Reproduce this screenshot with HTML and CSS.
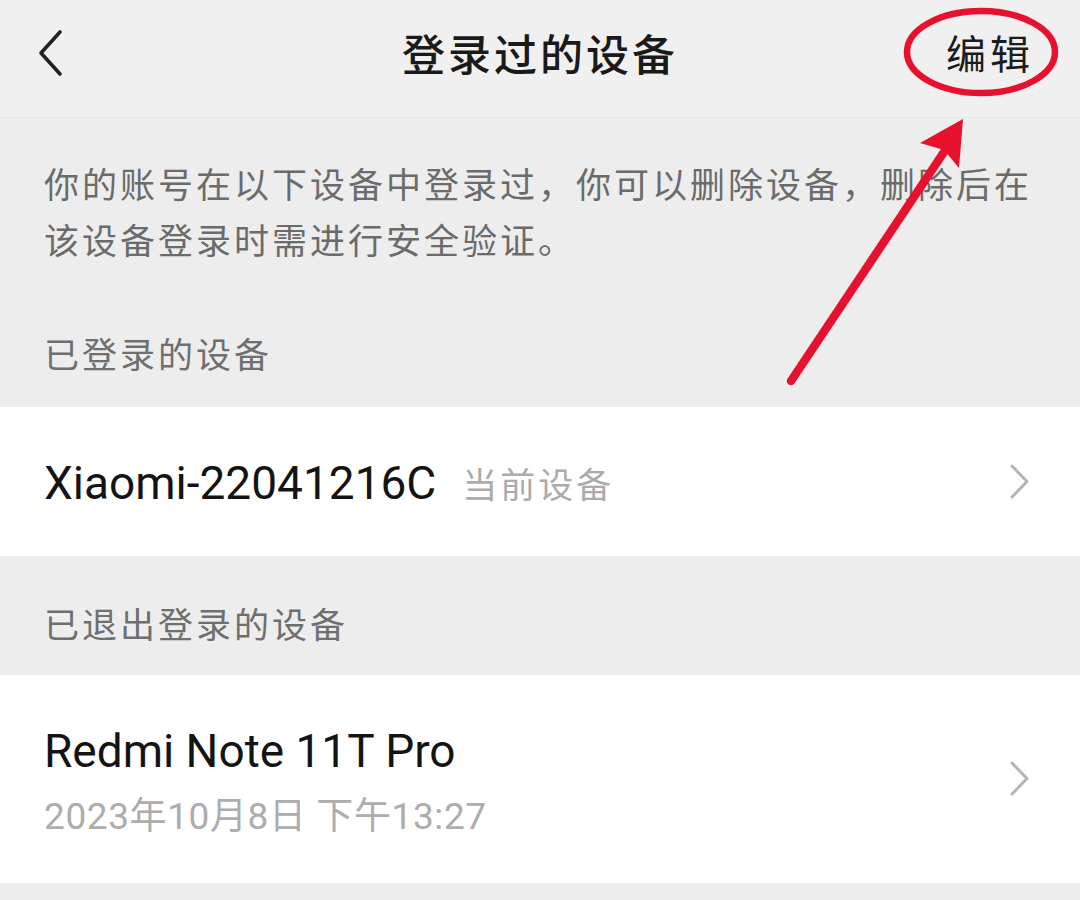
FILE: index.html
```html
<!DOCTYPE html>
<html lang="zh-CN">
<head>
    <meta charset="UTF-8">
    <meta name="viewport" content="width=device-width, initial-scale=1.0">
    <title>登录过的设备</title>
    <link rel="stylesheet" href="styles.css">
</head>
<body>
    <div class="page">
        <div class="top-bar">
            <button class="back-btn" aria-label="返回">
                <svg width="30" height="50" viewBox="0 0 30 50">
                    <path d="M24 3 L5 24 L24 45" fill="none" stroke="#222" stroke-width="3.6" stroke-linecap="round" stroke-linejoin="round"/>
                </svg>
            </button>
            <h1 class="title">登录过的设备</h1>
            <button class="edit-btn">编辑</button>
        </div>

        <p class="intro">你的账号在以下设备中登录过，你可以删除设备，删除后在该设备登录时需进行安全验证。</p>

        <div class="section-label first">已登录的设备</div>
        <div class="device-row single">
            <div class="device-main">
                <span class="device-name">Xiaomi-22041216C</span>
                <span class="device-tag">当前设备</span>
            </div>
            <svg class="chevron" width="24" height="38" viewBox="0 0 24 38">
                <path d="M4 3 L19 18.5 L4 34" fill="none" stroke="#b4b4b4" stroke-width="3" stroke-linecap="round" stroke-linejoin="round"/>
            </svg>
        </div>

        <div class="section-label">已退出登录的设备</div>
        <div class="device-row double">
            <div class="device-info">
                <span class="device-name">Redmi Note 11T Pro</span>
                <span class="device-time">2023年10月8日 下午13:27</span>
            </div>
            <svg class="chevron" width="24" height="38" viewBox="0 0 24 38">
                <path d="M4 3 L19 18.5 L4 34" fill="none" stroke="#b4b4b4" stroke-width="3" stroke-linecap="round" stroke-linejoin="round"/>
            </svg>
        </div>

        <!-- red hand-drawn annotation over the edit button -->
        <svg class="annotation" width="1080" height="900" viewBox="0 0 1080 900">
            <ellipse cx="981" cy="52" rx="74" ry="41" fill="none" stroke="#e8112d" stroke-width="6.5"/>
            <line x1="791" y1="381" x2="948" y2="146" stroke="#e8112d" stroke-width="8.5" stroke-linecap="round"/>
            <path d="M963 119 L920 143 L944 150 L959 168 Z" fill="#e8112d"/>
        </svg>
    </div>
</body>
</html>
```

FILE: styles.css
```css
body {
    margin: 0;
    background-color: #ededed;
    font-family: Roboto, "Noto Sans CJK SC", sans-serif;
    color: #1a1a1a;
}

.page {
    position: relative;
    width: 1080px;
    min-height: 900px;
    overflow: hidden;
}

.top-bar {
    display: grid;
    grid-template-columns: 1fr auto 1fr;
    align-items: center;
    height: 117px;
    padding: 0 46px 0 36px;
    background-color: #f0f0f0;
    border-bottom: 1px solid #e7e7e7;
}

.back-btn {
    justify-self: start;
    display: flex;
    padding: 0;
    margin-top: -10px;
    border: none;
    background: none;
}

.title {
    margin: 0 0 14px 10px;
    font-size: 43px;
    font-weight: 500;
    letter-spacing: 3px;
    color: #1a1a1a;
}

.edit-btn {
    justify-self: end;
    padding: 0;
    margin-bottom: 14px;
    border: none;
    background: none;
    font-family: inherit;
    font-size: 40px;
    letter-spacing: 4px;
    color: #1c1c1c;
}

.intro {
    margin: 0;
    padding: 41px 44px 0;
    font-size: 35px;
    line-height: 56px;
    letter-spacing: 3px;
    color: #6b6b6b;
}

.section-label {
    padding: 43px 44px 20px;
    font-size: 35px;
    line-height: 56px;
    letter-spacing: 3px;
    color: #6f6f6f;
}

.section-label.first {
    padding-top: 58px;
    padding-bottom: 22px;
}

.device-row {
    display: flex;
    align-items: center;
    justify-content: space-between;
    padding: 0 48px 0 44px;
    background-color: #ffffff;
}

.device-row.single {
    height: 149px;
}

.device-row.double {
    height: 208px;
}

.device-main {
    display: flex;
    align-items: center;
    gap: 26px;
    padding-top: 2px;
}

.device-info {
    display: flex;
    flex-direction: column;
    gap: 12px;
    padding-top: 6px;
}

.device-name {
    font-size: 46px;
    line-height: 58px;
    color: #141414;
}

.device-tag {
    font-size: 35px;
    letter-spacing: 3px;
    color: #ababab;
}

.device-time {
    font-size: 37px;
    line-height: 50px;
    letter-spacing: 0.6px;
    color: #adadad;
}

.chevron {
    flex: none;
}

.annotation {
    position: absolute;
    top: 0;
    left: 0;
    pointer-events: none;
}
```
